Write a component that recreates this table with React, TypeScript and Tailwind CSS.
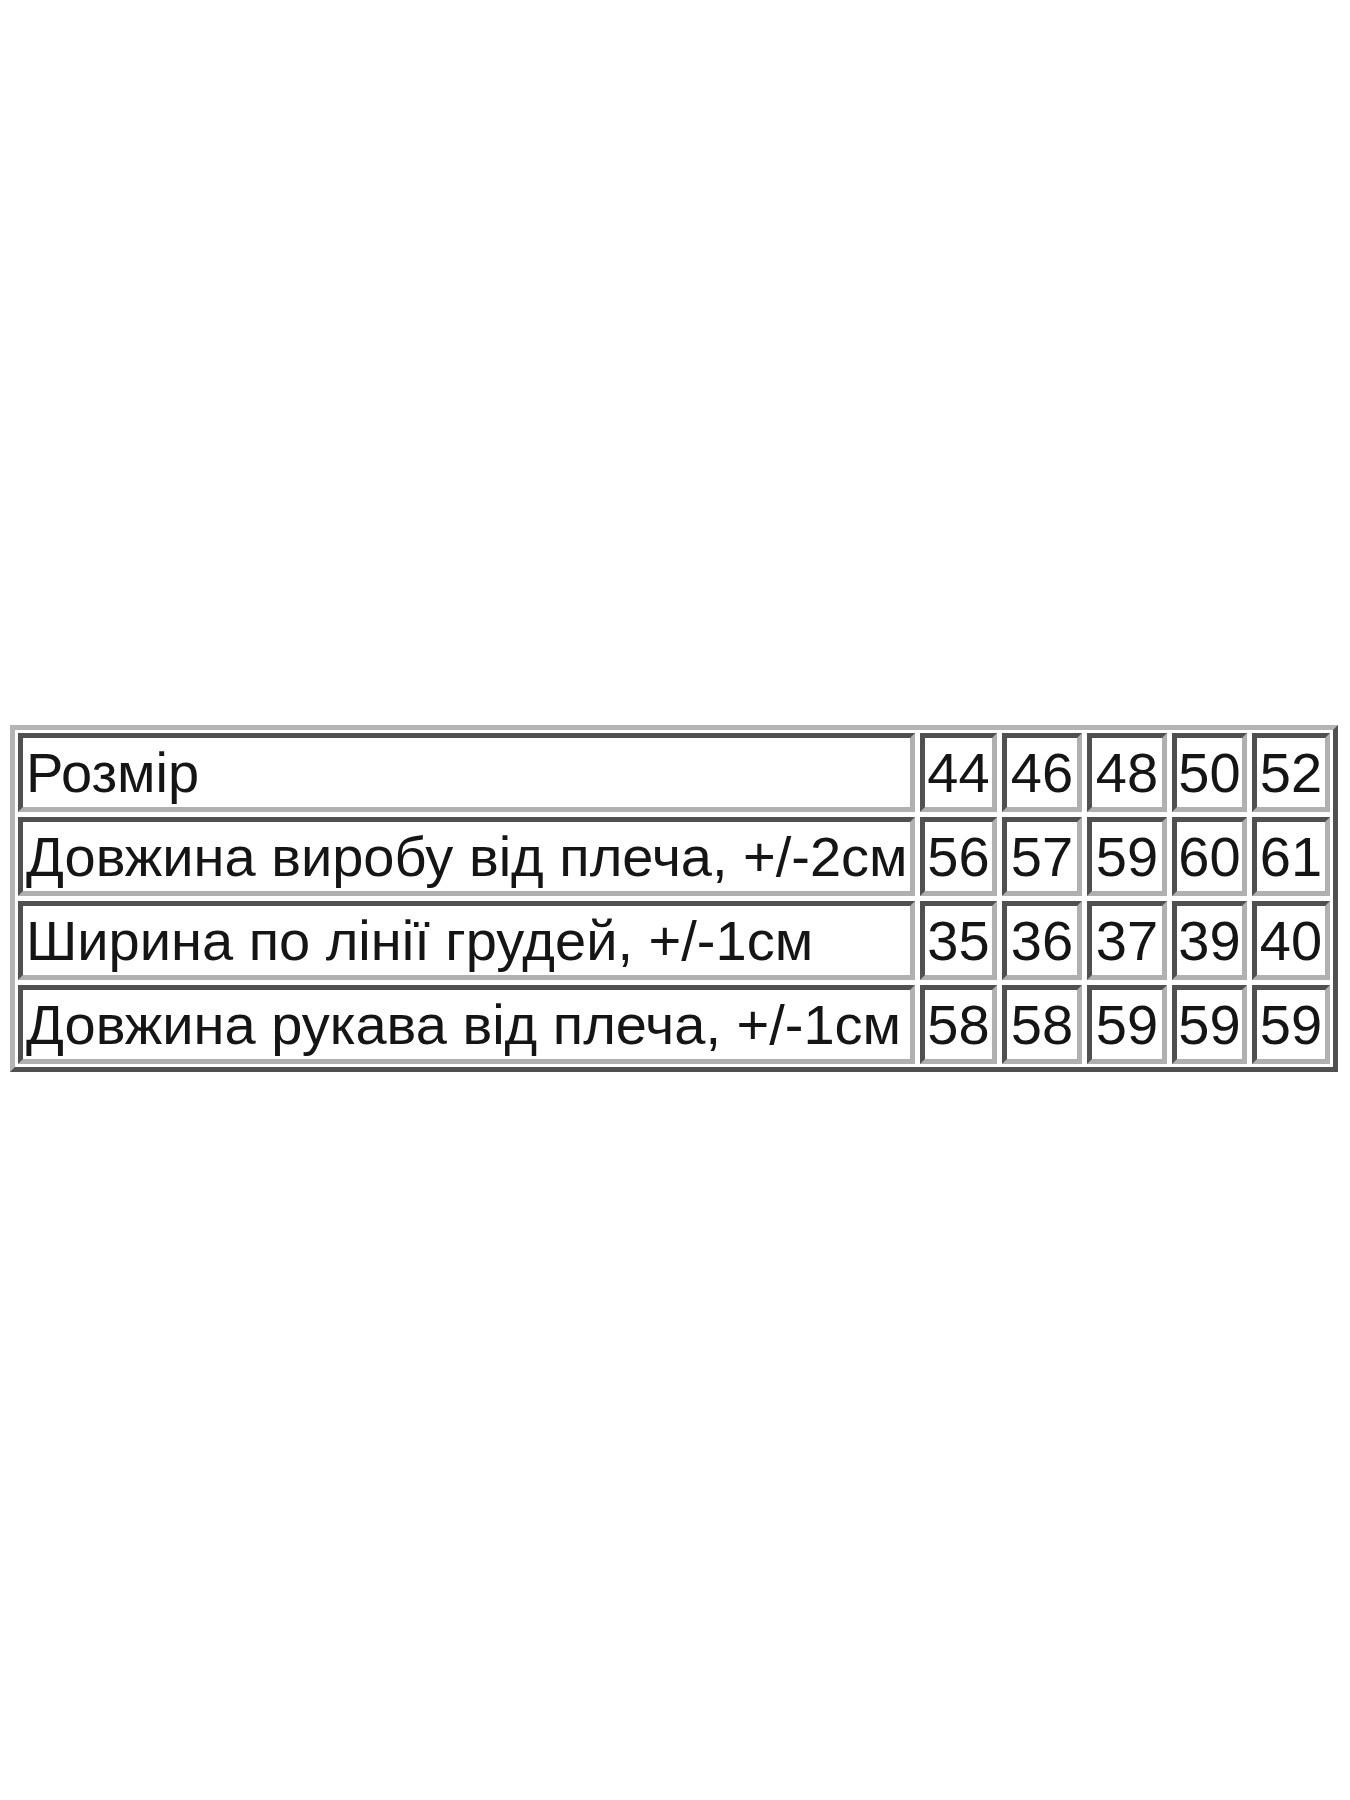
const sizes = ['44', '46', '48', '50', '52'];

const rows: { label: string; values: string[] }[] = [
  { label: 'Розмір', values: sizes },
  { label: 'Довжина виробу від плеча, +/-2см', values: ['56', '57', '59', '60', '61'] },
  { label: 'Ширина по лінії грудей, +/-1см', values: ['35', '36', '37', '39', '40'] },
  { label: 'Довжина рукава від плеча, +/-1см', values: ['58', '58', '59', '59', '59'] },
];

// inset cell border, like an old border="1" table scaled up
const cell =
  'flex items-center h-[79px] border-[5px] border-t-[#505050] border-l-[#505050] border-b-[#b0b0b0] border-r-[#b0b0b0] bg-white text-[56px] leading-none text-[#151515]';

export default function App() {
  return (
    <div className="min-h-[1800px] w-[1350px] bg-white pt-[725px] pl-[10px]" style={{ fontFamily: '"Liberation Sans", Arial, sans-serif' }}>
      <div className="w-[1328px] border-[5px] border-t-[#b4b4b4] border-l-[#b4b4b4] border-b-[#505050] border-r-[#505050] p-[3px]">
        <div className="grid grid-cols-[897px_77px_80px_80px_75px_78px] gap-[5px]">
          {rows.map((r) => (
            <div key={r.label} className="contents">
              <div className={`${cell} pl-[3px] whitespace-nowrap`}>{r.label}</div>
              {r.values.map((v, i) => (
                <div key={i} className={`${cell} justify-center`}>{v}</div>
              ))}
            </div>
          ))}
        </div>
      </div>
    </div>
  );
}
